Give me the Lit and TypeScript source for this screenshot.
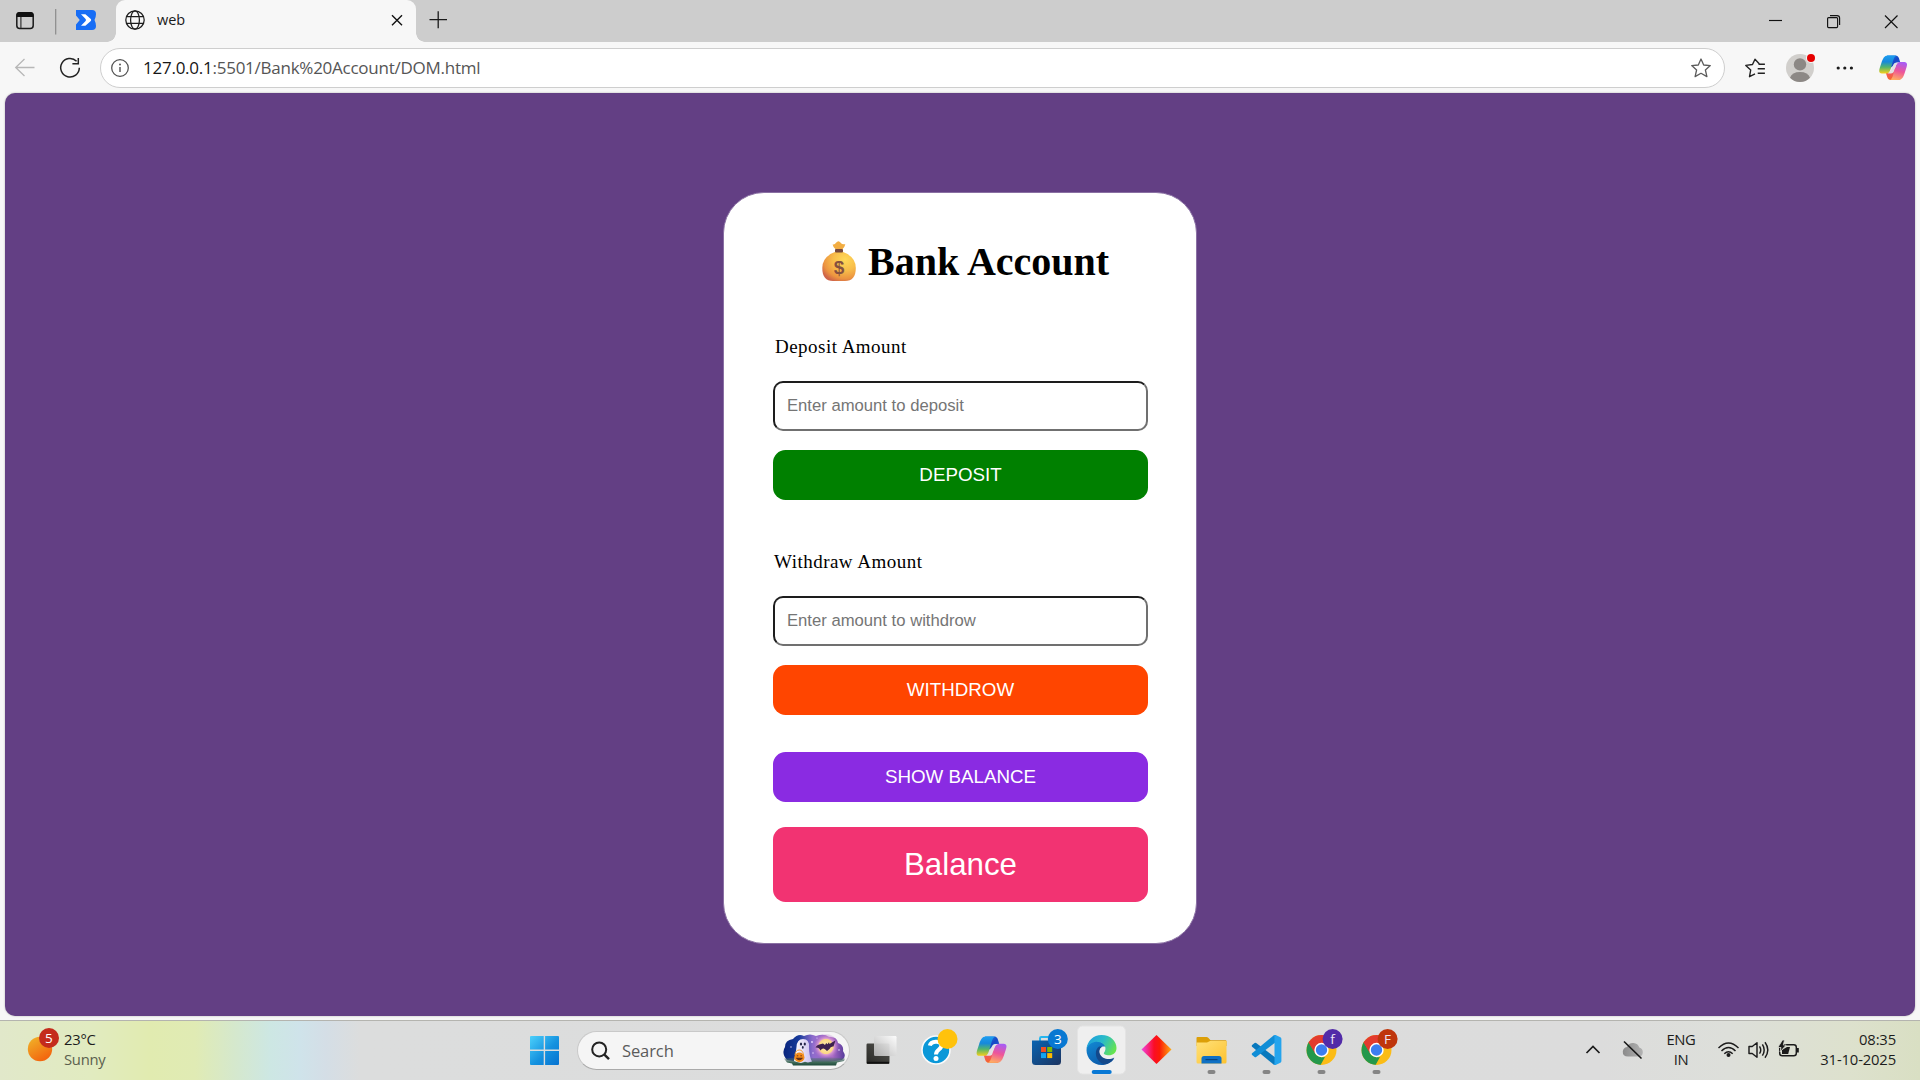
import { LitElement, html, svg, css } from "lit";
import { customElement, property } from "lit/decorators.js";

const copilot = (id: string) => svg`
  <defs>
    <linearGradient id="${id}a" x1="0" y1="0" x2="0" y2="1">
      <stop offset="0" stop-color="#1d9df0"/><stop offset=".35" stop-color="#1689dc"/>
      <stop offset=".65" stop-color="#52b56d"/><stop offset="1" stop-color="#f5cf1b"/>
    </linearGradient>
    <linearGradient id="${id}b" x1=".6" y1="0" x2=".35" y2="1">
      <stop offset="0" stop-color="#a95cf3"/><stop offset=".5" stop-color="#ee5599"/><stop offset="1" stop-color="#ffae62"/>
    </linearGradient>
    <linearGradient id="${id}c" x1="0" y1="0" x2="1" y2="1">
      <stop offset="0" stop-color="#1899ee"/><stop offset=".5" stop-color="#1747c6"/><stop offset="1" stop-color="#2765db"/>
    </linearGradient>
    <linearGradient id="${id}d" x1="0" y1="0" x2="0" y2="1">
      <stop offset="0" stop-color="#ef4d8c"/><stop offset="1" stop-color="#f5652a"/>
    </linearGradient>
  </defs>
  <path fill="url(#${id}c)" d="M8.5 1H17.8C20.4 1 21.2 3.4 22 6.2L22.7 8.6H19.2C16.8 8.6 15.7 9.8 14.9 12L11 15Z"/>
  <path fill="url(#${id}d)" d="M21.5 27H12.2C9.6 27 8.8 24.6 8 21.8L7.3 19.4H10.8C13.2 19.4 14.3 18.2 15.1 16L19 13Z"/>
  <path fill="url(#${id}a)" d="M15.5 1H9.2C5.8 1 4 4.4 2.6 8.8C1.2 13 .2 15.6 .2 17.4C.2 19 1.2 20 3 20H7.7C10.6 20 11.5 18 12.4 15.2L14.8 7.2C15.8 3.8 16.6 1.8 18.4 1.2Z"/>
  <path fill="url(#${id}b)" d="M14.5 27H20.8C24.2 27 26 23.6 27.4 19.2C28.8 15 29.8 12.4 29.8 10.6C29.8 9 28.8 8 27 8H22.3C19.4 8 18.5 10 17.6 12.8L15.2 20.8C14.2 24.2 13.4 26.2 11.6 26.8Z"/>
  <path fill="#e3e1e4" d="M15.7 10.4Q16.6 8.6 18.7 8.4H21.4Q18.9 9 17.9 11.8L15.6 18.6Q14.8 20 12.8 20H9.2Q11.6 19.3 12.5 16.4Z"/>`;

const chrome = (id: string, color: string, letter: string) => svg`
  <defs><clipPath id="${id}"><circle cx="27.5" cy="30" r="15"/></clipPath></defs>
  <g clip-path="url(#${id})">
    <rect x="12" y="14" width="32" height="32" fill="#fbbc16"/>
    <path d="M12 14H44V23H27.5L21 33.7L13 20Z" fill="#e33b2e"/>
    <path d="M13.8 21L21.4 33.6C23 37 28 38 31 37L26 46H10V22Z" fill="#24984b"/>
    <path d="M13.8 21L21.5 34L18 22Z" fill="#e33b2e"/>
  </g>
  <circle cx="27.5" cy="30" r="7.2" fill="#fff"/><circle cx="27.5" cy="30" r="5.7" fill="#3b7df0"/>
  <circle cx="38.6" cy="19" r="10" fill="${color}"/>
  <text x="38.6" y="24" text-anchor="middle" font-size="13.5" fill="#ece4f2">${letter}</text>`;

const dock: Record<string, unknown> = {
  start: svg`
    <defs><linearGradient id="win" x1="0" y1="0" x2="1" y2="1"><stop offset="0" stop-color="#4cd0fb"/><stop offset=".55" stop-color="#1592df"/><stop offset="1" stop-color="#0672d0"/></linearGradient></defs>
    <path fill="url(#win)" d="M14 16H26.7V29.6H13V17Q13 16 14 16ZM28.1 16H41Q42 16 42 17V29.6H28.1ZM13 31H26.7V45H14Q13 45 13 44ZM28.1 31H42V44Q42 45 41 45H28.1Z"/>`,
  taskview: svg`
    <defs>
      <linearGradient id="tv1" x1="0" y1="1" x2="1" y2="0"><stop offset="0" stop-color="#292926"/><stop offset="1" stop-color="#555550"/></linearGradient>
      <linearGradient id="tv2" x1="1" y1="0" x2="0" y2="1"><stop offset="0" stop-color="#fff"/><stop offset="1" stop-color="#b6b6b6"/></linearGradient>
    </defs>
    <rect x="12.5" y="23.5" width="23" height="20.5" rx="1.2" fill="url(#tv1)"/>
    <path d="M13 42.6H35" stroke="#111" stroke-width="1.6"/>
    <rect x="20" y="16" width="22.5" height="20" rx="1.2" fill="url(#tv2)" opacity=".93"/>`,
  help: svg`
    <circle cx="27" cy="30" r="14" fill="#0b98d8" stroke="#fafafa" stroke-width="1.6"/>
    <path d="M20.8 25.6C21.8 21.3 31.8 19.8 32.4 25.4C32.7 29.6 27 29.5 27 34.4" fill="none" stroke="#fff" stroke-width="4"/>
    <circle cx="27" cy="38.5" r="2.5" fill="#fff"/><circle cx="38.5" cy="19" r="10" fill="#ffc20c"/>`,
  copilot: svg`<g transform="translate(12.4 15.6) scale(1.01)">${copilot("ct")}</g>`,
  store: svg`
    <defs><linearGradient id="st" x1="0" y1="0" x2="1" y2="1"><stop offset="0" stop-color="#0964b2"/><stop offset="1" stop-color="#1c3460"/></linearGradient></defs>
    <path d="M21 22V18.4Q21 17 22.4 17H33" fill="none" stroke="#26b6ee" stroke-width="2"/>
    <path fill="url(#st)" d="M13 20.5H42V41.5Q42 45 38.5 45H16.5Q13 45 13 41.5Z"/>
    <path fill="#f25022" d="M22 27h5v5h-5z"/><path fill="#7fba00" d="M28.2 27h5v5h-5z"/><path fill="#13a5f3" d="M22 33.1h5v5h-5z"/><path fill="#ffb900" d="M28.2 33.1h5v5h-5z"/>
    <circle cx="38.8" cy="19" r="10" fill="#0878d2"/><text x="38.8" y="24" text-anchor="middle" font-size="13.5" fill="#fff">3</text>`,
  edge: svg`
    <defs>
      <linearGradient id="eg" x1="0" y1=".2" x2="1" y2=".6"><stop offset="0" stop-color="#1d9ddf"/><stop offset=".5" stop-color="#2abbc8"/><stop offset="1" stop-color="#66e44f"/></linearGradient>
      <linearGradient id="eb" x1="0" y1="0" x2=".6" y2="1"><stop offset="0" stop-color="#128bd6"/><stop offset="1" stop-color="#0c59a8"/></linearGradient>
    </defs>
    <rect x="3.5" y="6" width="48" height="48" rx="5" fill="#efefef" stroke="#e4e4e4"/>
    <path fill="url(#eb)" d="M12.5 30C13 23 19 20.3 24 21.3C28.5 22 30.8 24.5 31.6 26.7C27.5 25.5 24.6 28.5 25 32.6C25.6 38 32 41.8 40.3 38.2C37.6 42.5 33 45 27.5 45C19.2 45 12.5 38.3 12.5 30Z"/>
    <path fill="#14498b" d="M25.2 26.6C20.6 29.3 20.6 38 26.2 42.2C29 44.3 31.6 44.6 33.4 43.8C36.5 42.4 39 40.4 40.3 37.6C35 40.8 27.6 38.5 25.9 34C24.8 31.2 25.4 28.3 27.8 26.7Z"/>
    <path fill="url(#eg)" d="M12.5 29C13.2 21 19.5 15 27.5 15C36.7 15 42.5 21.4 42.5 28C42.5 32.8 38.8 35.3 35 35.3C31.4 35.3 29.2 34 30 32.8C32.2 29.8 31.8 26.7 29.8 24.5C25.8 20 15.5 20.8 12.5 29Z"/>
    <rect x="17.7" y="50" width="20" height="4" rx="2" fill="#0878d5"/>`,
  diamond: svg`
    <defs><linearGradient id="dm"><stop offset="0" stop-color="#f044e4"/><stop offset=".42" stop-color="#fb0d25"/><stop offset=".6" stop-color="#fb1a08"/><stop offset="1" stop-color="#ffac13"/></linearGradient></defs>
    <path fill="url(#dm)" d="M27.5 15L42.5 29.5L27.5 44L12.5 29.5Z"/>`,
  folder: svg`
    <defs><linearGradient id="fo" x1="0" y1="0" x2="1" y2="1"><stop offset="0" stop-color="#ffe17a"/><stop offset="1" stop-color="#fdc22f"/></linearGradient></defs>
    <path fill="#dc9f08" d="M12.5 18Q12.5 17 13.5 17H22.5Q23.5 17 24.5 18L26.5 20.2H41.5Q42.5 20.2 42.5 21.5V26H12.5Z"/>
    <path fill="url(#fo)" d="M12.5 22.5H23L26 21H42.5V42Q42.5 43.6 41 43.6H14Q12.5 43.6 12.5 42Z"/>
    <path fill="#0f70c4" d="M17.5 43.6V38.5Q17.5 36 20 36H35Q37.5 36 37.5 38.5V43.6Z"/><path d="M21.5 39.6H33.5" stroke="#07447f" stroke-width="1.2"/>
    <rect x="23.5" y="50" width="8" height="4" rx="2" fill="#858585"/>`,
  code: svg`
    <path fill="#0878bd" d="M12.8 25.2L15.6 23Q16.4 22.5 17.2 23L37 38V45L34.8 44.8L12.8 26.4Z"/>
    <path fill="#108dd6" d="M12.8 34.8L15.6 37Q16.4 37.5 17.2 37L37 22V15L34.8 15.2L12.8 33.6Z"/>
    <path fill="#24a4ed" d="M34.8 15.2L36.6 15.1L41.4 17.3Q42.4 17.8 42.4 19V41Q42.4 42.2 41.4 42.7L36.6 44.9L34.8 44.8Q35.5 44.2 35.5 43V17Q35.5 15.8 34.8 15.2Z"/>
    <rect x="23.5" y="50" width="8" height="4" rx="2" fill="#858585"/>`,
  chromeA: svg`${chrome("ch1", "#522ba8", "f")}<rect x="23.5" y="50" width="8" height="4" rx="2" fill="#858585"/>`,
  chromeB: svg`${chrome("ch2", "#bf360c", "F")}<rect x="23.5" y="50" width="8" height="4" rx="2" fill="#858585"/>`,
};

@customElement("dock-icon")
class DockIcon extends LitElement {
  @property() name = "";
  static styles = css`
    :host { display: block; width: 55px; height: 60px; flex: none; }
    svg { display: block; font-family: "Open Sans", sans-serif; }
  `;
  render() {
    return html`<svg width="55" height="60" viewBox="0 0 55 60">${dock[this.name]}</svg>`;
  }
}

@customElement("browser-bar")
class BrowserBar extends LitElement {
  static styles = css`
    :host { display: block; font-family: "Open Sans", "Noto Sans", sans-serif; background: #f7f7f7; }
    svg { display: block; flex: none; }
    .strip { display: flex; height: 42px; background: #cdcdcd; }
    .lead { width: 116px; }
    .tab { width: 300px; height: 43px; box-sizing: border-box; background: #f7f7f7; border-radius: 9px 9px 0 0; display: flex; align-items: center; padding: 0 13px 3px 9px; position: relative; }
    .tab::before, .tab::after { content: ""; position: absolute; bottom: 1px; width: 9px; height: 9px; }
    .tab::before { left: -9px; background: radial-gradient(circle at 0 0, #cdcdcd 8.5px, #f7f7f7 9px); }
    .tab::after { right: -9px; background: radial-gradient(circle at 100% 0, #cdcdcd 8.5px, #f7f7f7 9px); }
    .title { flex: 1; font-size: 14.5px; line-height: 20px; margin-left: 12px; padding-bottom: 1px; color: #1b1b1b; letter-spacing: -0.1px; }
    .grow { flex: 1; }
    .tools { display: flex; height: 51px; align-items: center; }
    .pill { width: 1625px; height: 40px; box-sizing: border-box; border: 1px solid #cecece; border-radius: 20px; background: #fff; display: flex; align-items: center; padding: 0 12px 0 9px; margin-top: 1px; }
    .url { flex: 1; margin-left: 13px; padding-bottom: 2px; font-size: 17px; color: #555; letter-spacing: -0.25px; white-space: nowrap; }
    .host { color: #161616; }
  `;
  render() {
    return html`
      <div class="strip">
        <svg class="lead" width="116" height="42" viewBox="0 0 116 42">
          <rect x="16.8" y="12.8" width="16.4" height="15.6" rx="3" fill="none" stroke="#1a1a1a" stroke-width="1.5"/>
          <path d="M16.5 17V15Q16.5 12 19.5 12H30.5Q33.5 12 33.5 15V17Z" fill="#111"/><path d="M20.9 17V28" stroke="#333" stroke-width="1.2"/>
          <path d="M55.7 9V34.5" stroke="#8b8b8b" stroke-width="1.2"/>
          <path fill="#176df5" d="M76 10H92Q96 10 96 14Q96 17 94.5 20Q96 23 96 26Q96 30 92 30H76V24.5L79.8 20L76 15.5Z"/>
          <path fill="#fff" d="M81 14.2H85.4L90.8 19Q91.6 20 90.8 21L85.4 25.8H81L85.6 21Q86.4 20 85.6 19Z"/>
        </svg>
        <div class="tab">
          <svg width="20" height="20" viewBox="0 0 20 20" fill="none" stroke="#1d1d1d" stroke-width="1.25">
            <circle cx="10" cy="10" r="9.2"/><ellipse cx="10" cy="10" rx="4.4" ry="9.2"/><path d="M1.6 6.7H18.4M1.6 13.3H18.4"/>
          </svg>
          <span class="title">web</span>
          <svg width="12" height="12" viewBox="0 0 12 12" stroke="#111" stroke-width="1.4"><path d="M1 1.2L11 11.2M11 1.2L1 11.2"/></svg>
        </div>
        <svg width="44" height="42" viewBox="0 0 44 42"><path d="M13.5 19.7H31M22.2 11.2V28.2" stroke="#1a1a1a" stroke-width="1.3"/></svg>
        <div class="grow"></div>
        <svg width="160" height="42" viewBox="0 0 160 42" fill="none" stroke="#111" stroke-width="1.15">
          <path d="M9 20.5H22"/><rect x="67.6" y="17.6" width="10" height="10" rx="1"/><path d="M70 15.6H77Q79.6 15.6 79.6 18V25"/><path d="M125 15.5L137.5 28M137.5 15.5L125 28"/>
        </svg>
      </div>
      <div class="tools">
        <svg width="100" height="51" viewBox="0 0 100 51" fill="none">
          <path d="M34.5 25.5H16M24.5 17L15.7 25.5L24.5 34" stroke="#b7b7b7" stroke-width="1.3"/>
          <path d="M76.6 19.2A9.3 9.3 0 1 0 79.3 25.7M78.3 16V21.8H72.4" stroke="#222" stroke-width="1.5"/>
        </svg>
        <div class="pill">
          <svg width="20" height="20" viewBox="0 0 20 20"><circle cx="10" cy="10" r="8.3" fill="none" stroke="#505050" stroke-width="1.25"/><path d="M10 9V14" stroke="#505050" stroke-width="1.4"/><circle cx="10" cy="6.5" r=".95" fill="#505050"/></svg>
          <span class="url"><span class="host">127.0.0.1</span>:5501/Bank%20Account/DOM.html</span>
          <svg width="22" height="22" viewBox="0 0 22 22"><path d="M11 2L13.7 8L20.3 8.6L15.4 13L16.9 19.6L11 16.3L5.1 19.6L6.6 13L1.7 8.6L8.3 8Z" fill="none" stroke="#5b5b5b" stroke-width="1.3" stroke-linejoin="round"/></svg>
        </div>
        <svg width="195" height="51" viewBox="0 0 195 51">
          <path d="M34.2 21.8L30 17.2L27.5 22.5L20.8 23.4L25.7 28L24.5 34.7L30 31.8M33.5 22.2H39.9M32.7 26.7H39.9M32.7 31.3H39.9" fill="none" stroke="#222" stroke-width="1.4" stroke-linejoin="round"/>
          <circle cx="75" cy="26" r="14" fill="#d1cfcc"/><circle cx="75" cy="22.4" r="6.2" fill="#8c8885"/>
          <path d="M65 35.8Q67 30 75 30Q83 30 85 35.8Q81 40 75 40Q69 40 65 35.8Z" fill="#8c8885"/>
          <circle cx="86" cy="16" r="5" fill="#f7f7f7"/><circle cx="86" cy="16" r="4" fill="#e60000"/>
          <g fill="#1b1b1b"><circle cx="113.2" cy="26" r="1.6"/><circle cx="119.8" cy="26" r="1.6"/><circle cx="126.4" cy="26" r="1.6"/></g>
          <g transform="translate(154 12.6) scale(.94)">${copilot("cb")}</g>
        </svg>
      </div>`;
  }
}

@customElement("bank-card")
class BankCard extends LitElement {
  static styles = css`
    :host { display: block; width: 474px; height: 752px; box-sizing: border-box; background: #fff; border: 1px solid #8a70a3; border-radius: 41px; padding: 42px 49px 0 49px; font-family: "Liberation Serif", serif; color: #000; }
    h1 { margin: 0; height: 54px; display: flex; align-items: center; font-size: 40px; line-height: 54px; padding-left: 48px; white-space: nowrap; }
    .bag { width: 36px; height: 42px; margin: 0 11px 2px 0; flex: none; }
    .label { font-size: 19px; line-height: 24px; height: 24px; letter-spacing: 0.48px; padding-left: 2px; }
    .first { margin-top: 46px; margin-bottom: 22px; }
    .second { margin-top: 50px; margin-bottom: 22px; padding-left: 1px; }
    input { display: block; width: 375px; height: 50px; box-sizing: border-box; margin: 0; border-width: 2px; border-style: solid; border-color: #1d1d1d #707070 #707070 #1d1d1d; border-radius: 10px; padding: 0 12px; background: #fff; font-family: "Liberation Sans", sans-serif; font-size: 16.667px; }
    input::placeholder { color: #757575; }
    button { display: block; width: 375px; height: 50px; margin: 19px 0 0; padding: 0; border: 0; border-radius: 12.5px; color: #fff; font-family: "Liberation Sans", sans-serif; font-size: 18.75px; }
    .deposit { background: #008000; }
    .withdraw { background: #ff4500; }
    .show { background: #8a2be2; margin-top: 37px; }
    .balance { background: #f23372; margin-top: 25px; height: 75px; font-size: 31.25px; }
  `;
  render() {
    return html`
      <h1>
        <svg class="bag" viewBox="0 0 36 42">
          <defs>
            <radialGradient id="bg" cx=".68" cy=".28" r=".8"><stop offset="0" stop-color="#ffd958"/><stop offset=".45" stop-color="#f8bd4a"/><stop offset=".8" stop-color="#ec9440"/><stop offset="1" stop-color="#cf6448"/></radialGradient>
          </defs>
          <path d="M11.6 4.4Q14 4.8 15 2.8Q17.5-.5 19.7 2.8Q21 4.8 24.3 4.2Q23.8 7 21.2 9.6H14.8Q12 7 11.6 4.4Z" fill="#f2ad42"/>
          <path d="M15 11.5H21Q34.8 16.5 34.8 28Q34.8 41 24 41H12Q1.3 41 1.3 28Q1.3 16.5 15 11.5Z" fill="url(#bg)"/>
          <rect x="14" y="9" width="8" height="3.5" rx="1" fill="#75483d"/>
          <text x="18" y="34" text-anchor="middle" font-family="Liberation Sans, sans-serif" font-weight="700" font-size="19" fill="#85503f">$</text>
        </svg>
        <span>Bank Account</span>
      </h1>
      <div class="label first">Deposit Amount</div>
      <input placeholder="Enter amount to deposit" />
      <button class="deposit">DEPOSIT</button>
      <div class="label second">Withdraw Amount</div>
      <input placeholder="Enter amount to withdrow" />
      <button class="withdraw">WITHDROW</button>
      <button class="show">SHOW BALANCE</button>
      <button class="balance">Balance</button>`;
  }
}

@customElement("task-bar")
class TaskBar extends LitElement {
  static styles = css`
    :host { display: flex; height: 60px; box-sizing: border-box; font-family: "Open Sans", "Noto Sans", sans-serif; font-size: 14.8px; color: #1c1c1c; position: relative;
      background: linear-gradient(90deg, #e1e8ca 0, #e1ebc0 90px, #e1ebb0 150px, #e0ebb4 195px, #d5e8cd 235px, #cde7e3 270px, #cfe3ea 300px, #d4dee6 325px, #dcdddd 360px, #dcdcdc 1600px, #dddfda 1730px, #dde1cd 1850px, #d9dfc3 1920px); }
    :host::before { content: ""; position: absolute; left: 0; right: 0; top: 0; height: 1px; background: #b4b4af; }
    svg { display: block; flex: none; font-family: "Open Sans", sans-serif; }
    .weather { width: 517px; display: flex; }
    .lines { line-height: 20px; padding-top: 9px; white-space: nowrap; letter-spacing: -0.15px; }
    .muted { color: #5b604e; }
    .weather .lines { letter-spacing: -0.25px; }
    .search { width: 273px; height: 39px; box-sizing: border-box; margin: 11px 3.5px 0 5px; border: 1px solid #c9c9c9; border-bottom-color: #aaa; border-radius: 20px; background: #f5f5f5; display: flex; align-items: center; padding-left: 13px; }
    .word { flex: 1; margin-left: 11px; font-size: 16.5px; color: #5b5b5b; letter-spacing: -0.1px; }
    .tray { margin-left: auto; display: flex; padding-right: 24px; }
    .lang { width: 34px; text-align: center; margin: 0 13px 0 13px; letter-spacing: -0.4px; }
    .clock { text-align: right; width: 85px; }
  `;
  render() {
    return html`
      <div class="weather">
        <svg width="64" height="60" viewBox="0 0 64 60">
          <defs><linearGradient id="sun" x1="0" y1="0" x2=".6" y2="1"><stop offset="0" stop-color="#f0b72a"/><stop offset="1" stop-color="#f3650e"/></linearGradient></defs>
          <circle cx="40" cy="29" r="12.2" fill="url(#sun)"/><circle cx="49" cy="18" r="10" fill="#c42b1c"/>
          <text x="48.8" y="23" text-anchor="middle" font-size="13.5" fill="#fff">5</text>
        </svg>
        <div class="lines"><div>23°C</div><div class="muted">Sunny</div></div>
      </div>
      <dock-icon name="start"></dock-icon>
      <div class="search">
        <svg width="20" height="20" viewBox="0 0 20 20" fill="none" stroke="#222" stroke-width="2"><circle cx="8.2" cy="8.4" r="7"/><path d="M13.4 13.6L18 18.2" stroke-width="2.4"/></svg>
        <span class="word">Search</span>
        <svg width="67" height="36" viewBox="0 0 67 36">
          <defs>
            <linearGradient id="sky"><stop offset="0" stop-color="#08247c"/><stop offset=".25" stop-color="#163a9a"/><stop offset=".48" stop-color="#8f6ccd"/><stop offset=".8" stop-color="#a868c4"/><stop offset="1" stop-color="#583d9c"/></linearGradient>
            <linearGradient id="grass" x1="0" y1="0" x2="0" y2="1"><stop offset="0" stop-color="#4e6b70" stop-opacity=".3"/><stop offset=".6" stop-color="#3f6a58"/><stop offset="1" stop-color="#1e4a3a"/></linearGradient>
            <radialGradient id="glow"><stop offset="0" stop-color="#fff0b0"/><stop offset=".55" stop-color="#fbd783"/><stop offset=".62" stop-color="#dc9cd0"/><stop offset="1" stop-color="#a76bcc" stop-opacity="0"/></radialGradient>
            <linearGradient id="ghost"><stop offset="0" stop-color="#fff"/><stop offset="1" stop-color="#cabdee"/></linearGradient>
          </defs>
          <path d="M5 27Q-1 20 3 14Q3 7 11 6Q16 0 22 3Q28 0 34 3Q42 0 47 4Q55 3 56 10Q62 12 61 18Q65 24 60 27Q30 33 5 27Z" fill="url(#sky)"/>
          <circle cx="44" cy="13.5" r="13" fill="url(#glow)"/>
          <path d="M2 25.5Q20 24 33 25Q52 24 63 25.5L62 28L55 29.5L54 32.5H11L10 30.5L5 29.5Z" fill="url(#grass)"/>
          <path d="M12 28Q13.5 23 14.5 14Q15 6 21 6Q27.5 6 27 14Q27 23 30 28.5L26 29.5L23 28.8L19 30L15 29Z" fill="url(#ghost)"/>
          <ellipse cx="19" cy="11" rx="1.1" ry="1.6" fill="#222248"/><ellipse cx="22.8" cy="11" rx="1.1" ry="1.6" fill="#222248"/><ellipse cx="20.8" cy="14.4" rx=".9" ry="1.3" fill="#222248"/>
          <path d="M13 22Q13.5 17 17.3 17Q21 17 21.5 22" fill="none" stroke="#f1a23b"/><ellipse cx="17.4" cy="24.4" rx="5.1" ry="4.8" fill="#f38b19"/>
          <path d="M14.8 22.8h1.5M18.4 22.8h1.5M14.4 25.2Q17.4 28.4 20.4 25.2Z" stroke="#542718" stroke-width=".8" fill="#542718"/>
          <path d="M33.5 14.5Q34.5 11.5 41 10.5L43 12L44.2 10L45.5 11.2L47 9.2L47.5 11Q50 9 53.5 7.5Q52.5 10.5 51.5 13.5Q48.5 13 47.5 16L45 18L43 16.2Q40.5 14.5 38.5 17.5Q37 14 33.5 14.5Z" fill="#3d214f"/>
          <g fill="#e9d9ff"><circle cx="30" cy="9" r=".9"/><circle cx="31" cy="20" r=".7"/><circle cx="57" cy="17" r=".8"/><circle cx="9" cy="14" r=".7"/><circle cx="35" cy="5" r=".6"/></g>
        </svg>
      </div>
      ${["taskview", "help", "copilot", "store", "edge", "diamond", "folder", "code", "chromeA", "chromeB"].map((n) => html`<dock-icon name=${n}></dock-icon>`)}
      <div class="tray">
        <svg width="72" height="60" viewBox="0 0 72 60">
          <defs><linearGradient id="cl"><stop offset="0" stop-color="#8b8b8b"/><stop offset="1" stop-color="#b2b2b2"/></linearGradient></defs>
          <path d="M7.5 33L14 26.5L20.5 33" fill="none" stroke="#1b1b1b" stroke-width="1.7"/>
          <path d="M49 36.5Q43.5 36.5 43.8 31.5Q44.2 27.5 48 27Q50 22.5 54.5 23Q59 23.3 60.3 27.5Q64 28.5 63.8 32.5Q63.5 36.5 60 36.5Z" fill="url(#cl)"/>
          <path d="M45 21.5L62.5 38.5" stroke="#151515" stroke-width="1.6"/>
        </svg>
        <div class="lines lang"><div>ENG</div><div>IN</div></div>
        <svg width="100" height="60" viewBox="0 0 100 60" fill="none" stroke="#1b1b1b" stroke-width="1.45">
          <path d="M7.5 28Q17.5 18 27.5 28M10.5 31Q17.5 24 24.5 31M13.3 33.8Q17.5 29.8 21.7 33.8"/><circle cx="17.5" cy="35" r="2" fill="#1b1b1b" stroke="none"/>
          <path d="M38 26.5H41.2L46 22.7V37.3L41.2 33.5H38Z" stroke-linejoin="round"/><path d="M48.5 26.3Q51 30 48.5 33.7M51.4 24.3Q55 30 51.4 35.7M54 22.3Q59.6 30 54 37.7"/>
          <rect x="68.7" y="24.7" width="16.6" height="11" rx="2.5"/><path d="M86.8 28V32.5" stroke-width="2"/>
          <path d="M71 34V30L76 27H79L77.2 34Z" fill="#1b1b1b" stroke="none"/><path d="M71.5 20L66.8 27.5H70L69 32L75.2 25H72.3L73.5 20Z" fill="#1b1b1b" stroke="#dcded6" stroke-width=".8"/>
        </svg>
        <div class="lines clock"><div>08:35</div><div>31-10-2025</div></div>
      </div>`;
  }
}

@customElement("app-root")
class AppRoot extends LitElement {
  static styles = css`
    :host { display: flex; flex-direction: column; width: 1920px; height: 1080px; overflow: hidden; background: #f7f7f7; }
    .page { flex: 1; margin: 0 5px 4.5px; background: #633f84; border-radius: 10px; display: flex; justify-content: center; align-items: flex-start; padding-top: 99px; box-sizing: border-box; box-shadow: 0 0 2px rgba(0,0,0,.3); }
  `;
  render() {
    return html`<browser-bar></browser-bar><main class="page"><bank-card></bank-card></main><task-bar></task-bar>`;
  }
}
